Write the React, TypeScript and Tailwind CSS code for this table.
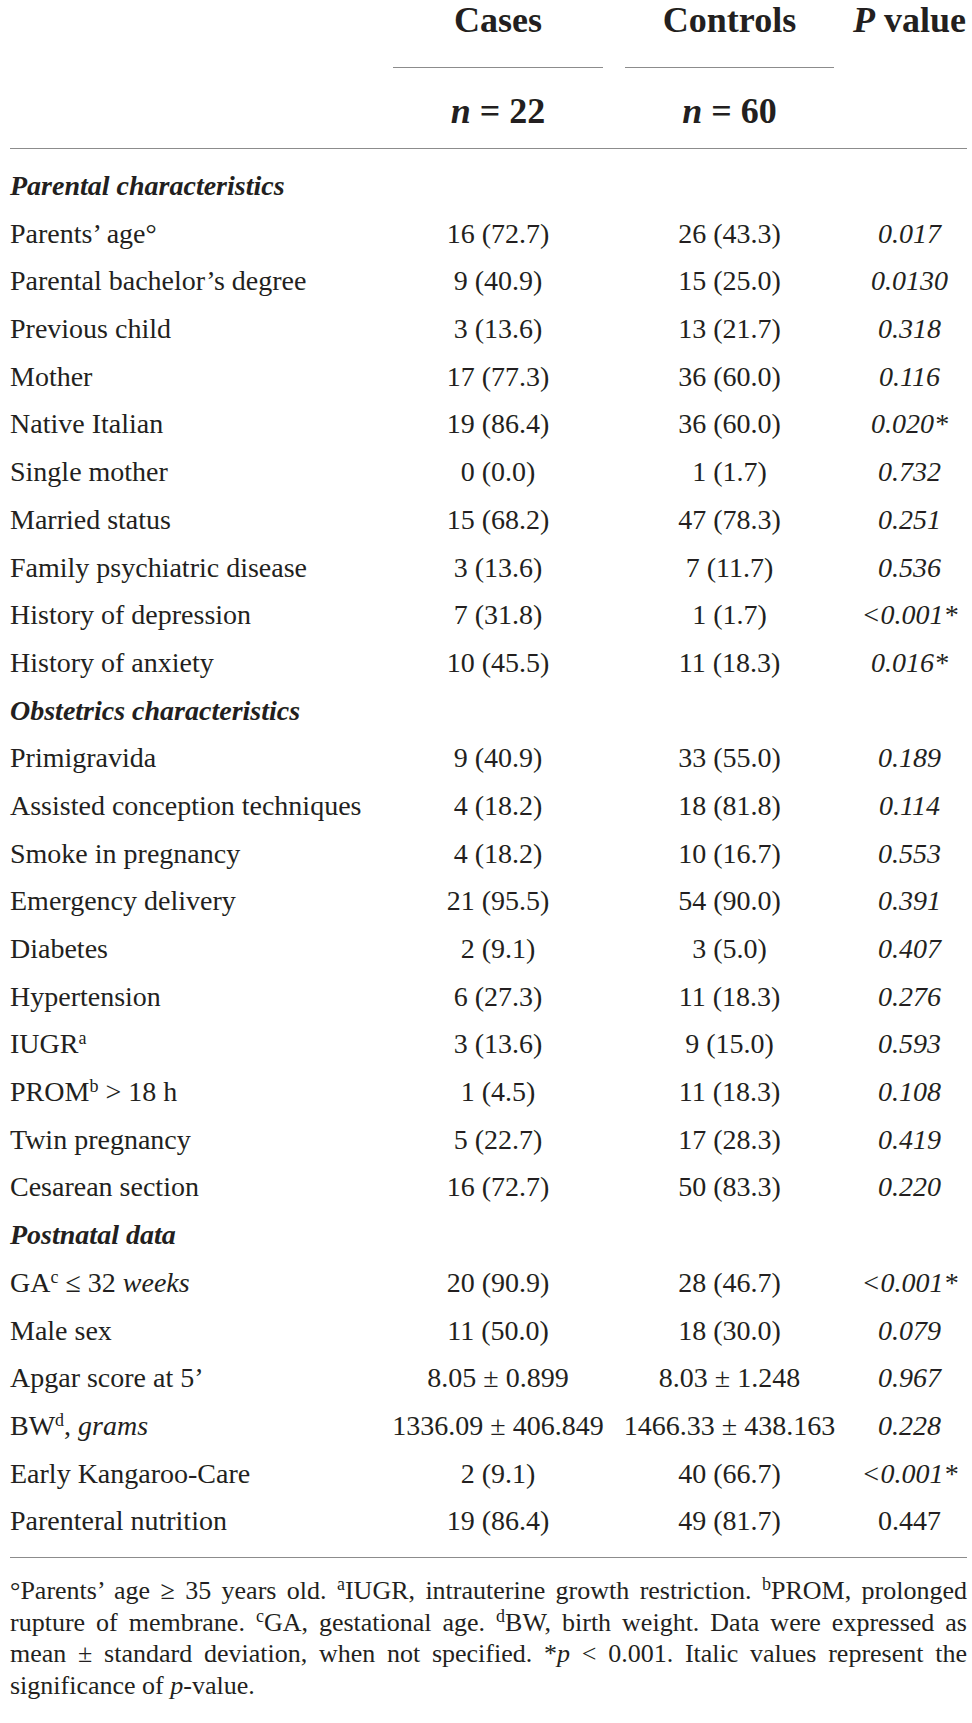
import React from 'react';

type Row = {
  label: React.ReactNode;
  cases: string;
  controls: string;
  p: string;
  upright?: boolean;
};

type Section = { title: string; rows: Row[] };

const Sup = ({ children }: { children: React.ReactNode }) => (
  <sup className="text-[18px]">{children}</sup>
);

const sections: Section[] = [
  {
    title: 'Parental characteristics',
    rows: [
      { label: 'Parents’ age°', cases: '16 (72.7)', controls: '26 (43.3)', p: '0.017' },
      { label: 'Parental bachelor’s degree', cases: '9 (40.9)', controls: '15 (25.0)', p: '0.0130' },
      { label: 'Previous child', cases: '3 (13.6)', controls: '13 (21.7)', p: '0.318' },
      { label: 'Mother', cases: '17 (77.3)', controls: '36 (60.0)', p: '0.116' },
      { label: 'Native Italian', cases: '19 (86.4)', controls: '36 (60.0)', p: '0.020*' },
      { label: 'Single mother', cases: '0 (0.0)', controls: '1 (1.7)', p: '0.732' },
      { label: 'Married status', cases: '15 (68.2)', controls: '47 (78.3)', p: '0.251' },
      { label: 'Family psychiatric disease', cases: '3 (13.6)', controls: '7 (11.7)', p: '0.536' },
      { label: 'History of depression', cases: '7 (31.8)', controls: '1 (1.7)', p: '<0.001*' },
      { label: 'History of anxiety', cases: '10 (45.5)', controls: '11 (18.3)', p: '0.016*' },
    ],
  },
  {
    title: 'Obstetrics characteristics',
    rows: [
      { label: 'Primigravida', cases: '9 (40.9)', controls: '33 (55.0)', p: '0.189' },
      { label: 'Assisted conception techniques', cases: '4 (18.2)', controls: '18 (81.8)', p: '0.114' },
      { label: 'Smoke in pregnancy', cases: '4 (18.2)', controls: '10 (16.7)', p: '0.553' },
      { label: 'Emergency delivery', cases: '21 (95.5)', controls: '54 (90.0)', p: '0.391' },
      { label: 'Diabetes', cases: '2 (9.1)', controls: '3 (5.0)', p: '0.407' },
      { label: 'Hypertension', cases: '6 (27.3)', controls: '11 (18.3)', p: '0.276' },
      { label: <>IUGR<Sup>a</Sup></>, cases: '3 (13.6)', controls: '9 (15.0)', p: '0.593' },
      { label: <>PROM<Sup>b</Sup> &gt; 18 h</>, cases: '1 (4.5)', controls: '11 (18.3)', p: '0.108' },
      { label: 'Twin pregnancy', cases: '5 (22.7)', controls: '17 (28.3)', p: '0.419' },
      { label: 'Cesarean section', cases: '16 (72.7)', controls: '50 (83.3)', p: '0.220' },
    ],
  },
  {
    title: 'Postnatal data',
    rows: [
      { label: <>GA<Sup>c</Sup> ≤ 32 <i>weeks</i></>, cases: '20 (90.9)', controls: '28 (46.7)', p: '<0.001*' },
      { label: 'Male sex', cases: '11 (50.0)', controls: '18 (30.0)', p: '0.079' },
      { label: 'Apgar score at 5’', cases: '8.05 ± 0.899', controls: '8.03 ± 1.248', p: '0.967' },
      { label: <>BW<Sup>d</Sup>, <i>grams</i></>, cases: '1336.09 ± 406.849', controls: '1466.33 ± 438.163', p: '0.228' },
      { label: 'Early Kangaroo-Care', cases: '2 (9.1)', controls: '40 (66.7)', p: '<0.001*' },
      { label: 'Parenteral nutrition', cases: '19 (86.4)', controls: '49 (81.7)', p: '0.447', upright: true },
    ],
  },
];

const cols = 'grid grid-cols-[372px_232px_238px_115px]';

export default function App() {
  return (
    <div className="w-[972px] min-h-[1723px] bg-white pl-[10px] pr-[5px] text-[#231f20] font-['Liberation_Serif',serif]">
      {/* Header */}
      <div className={`${cols} h-[40px] text-[36px] font-bold leading-[40px] whitespace-nowrap`}>
        <div />
        <div className="text-center">Cases</div>
        <div className="pr-[7px] text-center">Controls</div>
        <div className="text-center">
          <i>P</i> value
        </div>
      </div>
      <div className={`${cols} mt-[27px]`}>
        <div />
        <div className="mx-[11px] h-px bg-[#8c8c8c]" />
        <div className="ml-[11px] mr-[18px] h-px bg-[#8c8c8c]" />
        <div />
      </div>
      <div className={`${cols} mt-[23px] h-[40px] text-[36px] font-bold leading-[40px] whitespace-nowrap`}>
        <div />
        <div className="text-center">
          <i>n</i> = 22
        </div>
        <div className="pr-[7px] text-center">
          <i>n</i> = 60
        </div>
        <div />
      </div>
      <div className="mt-[17px] h-px bg-[#8c8c8c]" />

      {/* Body */}
      <div className="mt-[13px] text-[28px]">
        {sections.map((section) => (
          <React.Fragment key={section.title}>
            <div className="h-[47.7px] leading-[47.7px] font-bold italic">{section.title}</div>
            {section.rows.map((row, idx) => (
              <div key={idx} className={`${cols} h-[47.7px] leading-[47.7px] whitespace-nowrap`}>
                <div>{row.label}</div>
                <div className="text-center">{row.cases}</div>
                <div className="pr-[7px] text-center">{row.controls}</div>
                <div className={`text-center ${row.upright ? '' : 'italic'}`}>{row.p}</div>
              </div>
            ))}
          </React.Fragment>
        ))}
      </div>
      <div className="mt-[12px] h-px bg-[#8c8c8c]" />

      {/* Footnote */}
      <div className="mt-[17px] text-[26px] leading-[31.6px] text-justify">
        <p className="[text-align-last:justify]">
          °Parents’ age ≥ 35 years old. <Sup>a</Sup>IUGR, intrauterine growth restriction. <Sup>b</Sup>PROM, prolonged
        </p>
        <p className="[text-align-last:justify]">
          rupture of membrane. <Sup>c</Sup>GA, gestational age. <Sup>d</Sup>BW, birth weight. Data were expressed as
        </p>
        <p className="[text-align-last:justify]">
          mean ± standard deviation, when not specified. *<i>p</i> &lt; 0.001. Italic values represent the
        </p>
        <p>
          significance of <i>p</i>-value.
        </p>
      </div>
    </div>
  );
}
